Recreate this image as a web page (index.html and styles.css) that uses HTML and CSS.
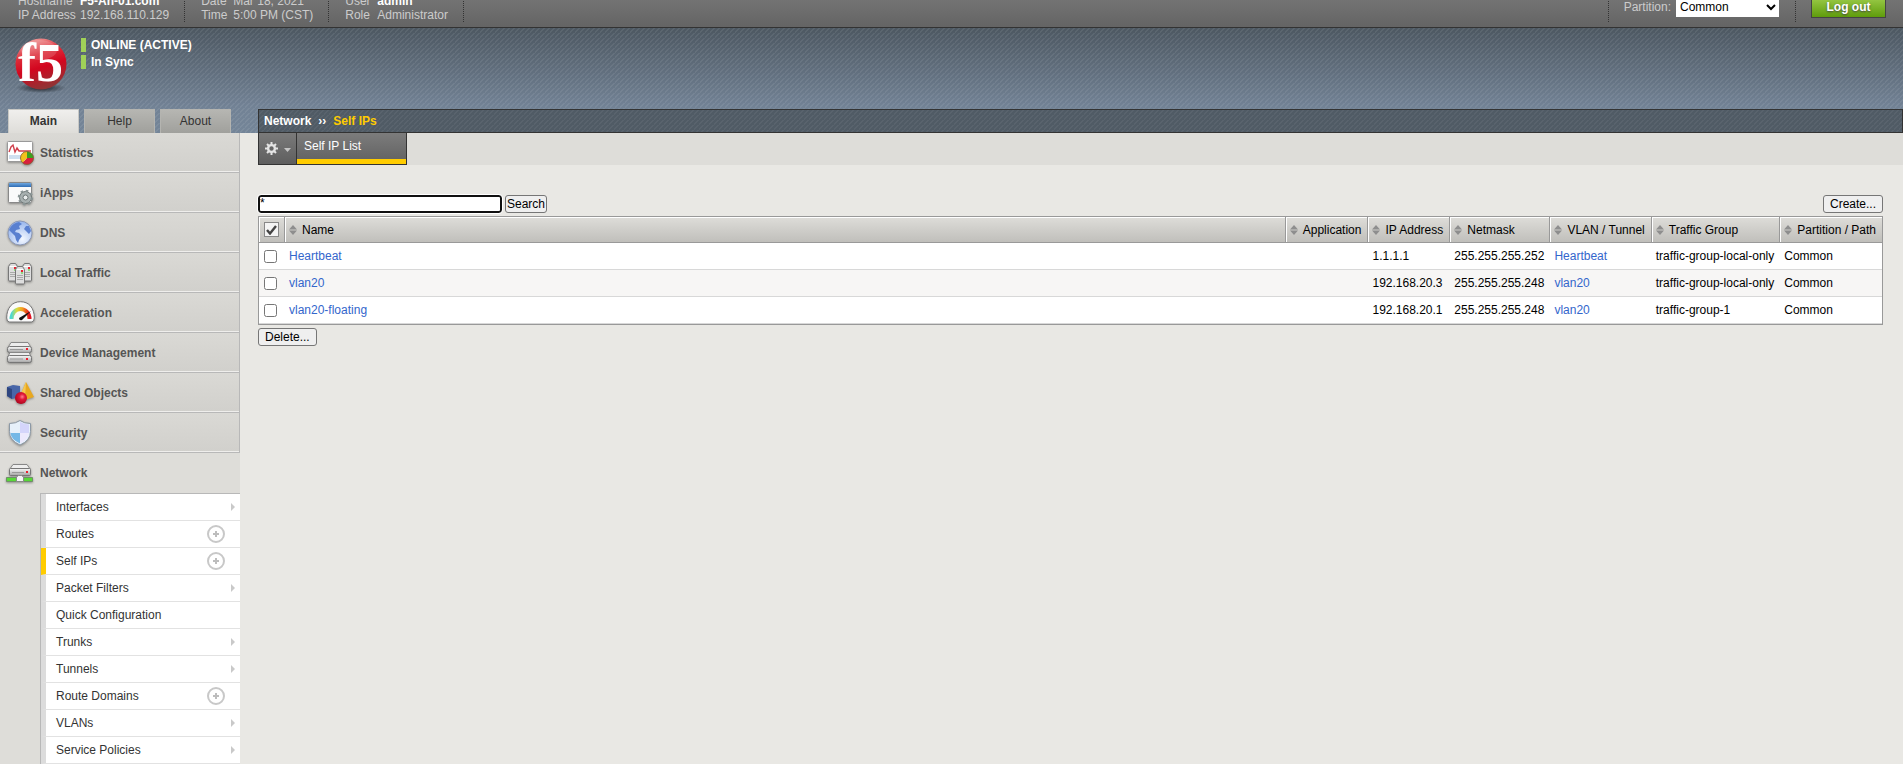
FILE: index.html
```html
<!DOCTYPE html>
<html lang="en">
<head>
<meta charset="utf-8">
<title>Network : Self IPs</title>
<link rel="stylesheet" href="styles.css">
</head>
<body>
<svg class="defs" aria-hidden="true">
  <defs>
    <linearGradient id="steel" x1="0" y1="0" x2="0" y2="1"><stop offset="0" stop-color="#fafafa"/><stop offset="1" stop-color="#a4a4a4"/></linearGradient>
    <linearGradient id="blueBar" x1="0" y1="0" x2="0" y2="1"><stop offset="0" stop-color="#6fa8e0"/><stop offset="1" stop-color="#2f6cb4"/></linearGradient>
    <radialGradient id="globe" cx=".6" cy=".75" r=".8"><stop offset="0" stop-color="#f4f8ff"/><stop offset="1" stop-color="#8fb0ec"/></radialGradient>
    <linearGradient id="dial" x1="0" y1="0" x2="1" y2="0"><stop offset="0" stop-color="#4fd8d0"/><stop offset=".3" stop-color="#d8dc3c"/><stop offset=".6" stop-color="#f4a020"/><stop offset="1" stop-color="#e01020"/></linearGradient>
    <radialGradient id="ball" cx=".6" cy=".4" r=".6"><stop offset="0" stop-color="#ff8090"/><stop offset=".4" stop-color="#e01838"/><stop offset="1" stop-color="#b00820"/></radialGradient>
    <linearGradient id="logoBall" x1=".2" y1="0" x2=".5" y2="1"><stop offset="0" stop-color="#f2a7a4"/><stop offset=".35" stop-color="#dc2b38"/><stop offset=".6" stop-color="#d3061f"/><stop offset="1" stop-color="#8f3535"/></linearGradient>
    <radialGradient id="logoShadow"><stop offset="0" stop-color="#20262c"/><stop offset="1" stop-color="#20262c" stop-opacity="0"/></radialGradient>
    <symbol id="sort" viewBox="0 0 8 10"><path d="M0 4.500 4 0l4 4.500zM0 5.500h8L4 10z" fill="#8e8e8e"/></symbol>
    <symbol id="more" viewBox="0 0 4 8"><path d="M0 0l4 4-4 4z" fill="#c9c9c9"/></symbol>
    <symbol id="add" viewBox="0 0 18 18"><circle cx="9" cy="9" r="8" fill="#fff" stroke="#c8c8c8" stroke-width="2"/><path d="M6 9h6M9 6v6" stroke="#bdbdbd" stroke-width="2"/></symbol>
    <g id="server"><path d="M.5 3.500 2.500.5h5l2 3v13.500q0 1-1 1h-7q-1 0-1-1z" fill="#dedede" stroke="#777"/><path d="M2 3.500h6" stroke="#fff"/><path d="M2 9.500h6M2 11.500h6M2 13.500h6" stroke="#aaa"/><path d="M6 4h2v2H6z" fill="#e82030"/><path d="M6 6h2v2H6z" fill="#90d880"/></g>
  </defs>
</svg>

<header class="topbar">
  <dl class="facts">
    <div><dt>Hostname</dt><dd class="strong">F5-An-01.com</dd></div>
    <div><dt>IP Address</dt><dd>192.168.110.129</dd></div>
  </dl>
  <dl class="facts">
    <div><dt class="short">Date</dt><dd>Mar 18, 2021</dd></div>
    <div><dt class="short">Time</dt><dd>5:00 PM (CST)</dd></div>
  </dl>
  <dl class="facts">
    <div><dt class="short">User</dt><dd class="strong">admin</dd></div>
    <div><dt class="short">Role</dt><dd>Administrator</dd></div>
  </dl>
  <div class="partition">
    <label for="partition">Partition:</label>
    <select id="partition"><option>Common</option></select>
  </div>
  <div class="logout"><button type="button">Log out</button></div>
</header>

<div class="banner">
  <div class="brand">
    <svg class="logo" width="56" height="56" viewBox="0 0 56 56" role="img" aria-label="F5">
      <ellipse cx="28" cy="50" rx="25" ry="5" fill="url(#logoShadow)"/>
      <circle cx="28" cy="26" r="25.500" fill="url(#logoBall)"/>
      <ellipse cx="26" cy="12" rx="18" ry="10" fill="#fff" opacity=".15"/>
      <text x="5" y="43" class="logo-text">f5</text>
    </svg>
    <div class="status">
      <span>ONLINE (ACTIVE)</span>
      <span>In Sync</span>
    </div>
  </div>
  <div class="bars">
    <nav class="tabs">
      <a href="#main" class="current">Main</a>
      <a href="#help">Help</a>
      <a href="#about">About</a>
    </nav>
    <div class="crumbs"><span>Network</span><span class="sep">››</span><span class="here">Self IPs</span></div>
  </div>
</div>

<div class="page">
  <nav class="side">
    <a class="item" href="#statistics"><svg width="30" height="28" viewBox="0 0 30 28"><rect x="1.500" y="2.500" width="25" height="20" rx="1" fill="#fff" stroke="#999"/><path d="M3 16h22v4H3z" fill="#cfe0f0"/><path d="M3 13l2-5 2-2 2 7 2-4 2 3h12" fill="none" stroke="#d0404c" stroke-width="1.400"/><path d="M21 19V12.500A6.500 6.500 0 0 1 27.500 19z" fill="#3ca020"/><path d="M21 19h6.500a6.500 6.500 0 0 1-11 4.700z" fill="#d8203c"/><path d="M21 19l-4.500 4.700A6.500 6.500 0 0 1 21 12.500z" fill="#f2c21c"/><circle cx="21" cy="19" r="6.500" fill="none" stroke="#806030" stroke-width=".8"/></svg>Statistics</a>
    <a class="item" href="#iapps"><svg width="30" height="28" viewBox="0 0 30 28"><rect x="2.500" y="3.500" width="23" height="20" rx="1" fill="#fafafa" stroke="#888"/><path d="M3 4h22v4H3z" fill="url(#blueBar)"/><circle cx="19.500" cy="18.500" r="6" fill="#a7b0b0" stroke="#6e7777" stroke-width="1"/><circle cx="19.500" cy="18.500" r="6.800" fill="none" stroke="#8b9696" stroke-width="2" stroke-dasharray="2.600 2.740"/><circle cx="19.500" cy="18.500" r="2.500" fill="#e8ecec" stroke="#6e7777"/></svg>iApps</a>
    <a class="item" href="#dns"><svg width="30" height="28" viewBox="0 0 30 28"><circle cx="14" cy="14" r="12" fill="url(#globe)" stroke="#8b98b8"/><path d="M4 9q3-5 9-6l3 2-3 2 1 3-4 1-1 2 4 1 3 3-3 4-1 3-2-3-1-4-4-4-2-2zM20 7l3 0 2 5-2 3-3-3-2-2z" fill="#5a80d0"/></svg>DNS</a>
    <a class="item" href="#local-traffic"><svg width="30" height="28" viewBox="0 0 30 28"><use href="#server" x="2" y="4"/><use href="#server" x="16" y="4"/><use href="#server" x="9" y="7"/></svg>Local Traffic</a>
    <a class="item" href="#acceleration"><svg width="30" height="28" viewBox="0 0 30 28"><path d="M.7 19C.7 9 6 2.700 14.500 2.700S28.300 9 28.300 19q0 4-3 4h-21.600q-3 0-3-4z" fill="#fafafa" stroke="#777"/><path d="M5.500 20a9 10 0 0 1 18 0" fill="none" stroke="url(#dial)" stroke-width="4"/><path d="M13 19l12-7-9 9q-3 1-3-2z" fill="#111"/></svg>Acceleration</a>
    <a class="item" href="#device"><svg width="30" height="28" viewBox="0 0 30 28"><path d="M5 3.500h17l3 5H2z" fill="#ececec" stroke="#888"/><rect x="1.500" y="7.500" width="24" height="6" rx="2" fill="url(#steel)" stroke="#777"/><path d="M4 13.500h19l2 4H2z" fill="#ececec" stroke="#888"/><rect x="1.500" y="16.500" width="24" height="7" rx="2" fill="url(#steel)" stroke="#777"/><path d="M4 10.500h13M4 20h13" stroke="#999"/><path d="M20 9h2v2h-2zM20 19h2v2h-2z" fill="#e82030"/></svg>Device Management</a>
    <a class="item" href="#shared"><svg width="30" height="28" viewBox="0 0 30 28"><path d="M1 8l6-2 7 1v11l-8 2-5-3z" fill="#4866a8"/><path d="M1 8l5 2v10l-5-3z" fill="#2f4680"/><path d="M20 3l8 15-9 3-5-4z" fill="#e8a820"/><path d="M20 3l-6 14 5 4z" fill="#f6c850"/><circle cx="15" cy="19" r="6" fill="url(#ball)"/></svg>Shared Objects</a>
    <a class="item" href="#security"><svg width="30" height="28" viewBox="0 0 30 28"><path d="M14 1.500q4 3 10.500 3v8q0 9-10.500 13.500Q3.500 21.500 3.500 12.500v-8q6.500 0 10.500-3z" fill="#e6f0fa" stroke="#8c99a6"/><path d="M14 3q4 2 9 2.500V14h-9z" fill="#d4d5fb"/><path d="M14 14v10.500Q5 20.500 4.500 14z" fill="#74b8e6"/><path d="M14 14h9q-1 7-9 10.500z" fill="#ece9fd"/></svg>Security</a>
    <a class="item open" href="#network"><svg width="30" height="28" viewBox="0 0 30 28"><path d="M7 5.500h14l3.500 5h-21z" fill="#eee" stroke="#888"/><rect x="3.500" y="9.500" width="21" height="7" rx="1" fill="url(#steel)" stroke="#777"/><path d="M6 13.500h12" stroke="#999"/><path d="M20 12h2v2h-2z" fill="#e82030"/><path d="M.5 18.500h26v4H.5z" fill="#58d838" stroke="#6f8f68"/><path d="M10.500 18l2-1.500h3l2 1.500v4.500h-7z" fill="#f4f4f4" stroke="#888"/></svg>Network</a>
    <ul class="submenu">
      <li><a href="#interfaces">Interfaces</a><svg class="more"><use href="#more"/></svg></li>
      <li><a href="#routes">Routes</a><svg class="add"><use href="#add"/></svg></li>
      <li class="selected"><a href="#selfips">Self IPs</a><svg class="add"><use href="#add"/></svg></li>
      <li><a href="#filters">Packet Filters</a><svg class="more"><use href="#more"/></svg></li>
      <li><a href="#quick">Quick Configuration</a></li>
      <li><a href="#trunks">Trunks</a><svg class="more"><use href="#more"/></svg></li>
      <li><a href="#tunnels">Tunnels</a><svg class="more"><use href="#more"/></svg></li>
      <li><a href="#domains">Route Domains</a><svg class="add"><use href="#add"/></svg></li>
      <li><a href="#vlans">VLANs</a><svg class="more"><use href="#more"/></svg></li>
      <li><a href="#policies">Service Policies</a><svg class="more"><use href="#more"/></svg></li>
    </ul>
  </nav>

  <main>
    <div class="menubar">
      <button type="button" class="gear" aria-label="Options"><svg width="26" height="13" viewBox="0 0 26 13"><path d="M6.500 0v13M0 6.500h13M2 2l9 9M11 2l-9 9" stroke="#e4e4e4" stroke-width="2"/><circle cx="6.500" cy="6.500" r="3.400" fill="#666" stroke="#e4e4e4" stroke-width="2.400"/><path d="M19 6h7l-3.500 4z" fill="#c4c4c4"/></svg></button>
      <a class="view" href="#list">Self IP List</a>
    </div>
    <form class="content">
      <div class="tools">
        <input type="text" class="filter" value="*" aria-label="Filter">
        <button type="button" class="btn tight">Search</button>
        <button type="button" class="btn create">Create...</button>
      </div>
      <table>
        <thead>
          <tr>
            <th class="pick"><button type="button" class="all" aria-label="Select all"><svg width="11" height="10" viewBox="0 0 11 10"><path d="M1 5l3 3.500L10 1" fill="none" stroke="#444" stroke-width="2.400"/></svg></button></th>
            <th class="name"><svg class="sort"><use href="#sort"/></svg>Name</th>
            <th><svg class="sort"><use href="#sort"/></svg>Application</th>
            <th><svg class="sort"><use href="#sort"/></svg>IP Address</th>
            <th><svg class="sort"><use href="#sort"/></svg>Netmask</th>
            <th><svg class="sort"><use href="#sort"/></svg>VLAN / Tunnel</th>
            <th><svg class="sort"><use href="#sort"/></svg>Traffic Group</th>
            <th><svg class="sort"><use href="#sort"/></svg>Partition / Path</th>
          </tr>
        </thead>
        <tbody>
          <tr><td class="pick"><input type="checkbox" aria-label="Heartbeat"></td><td><a href="#h">Heartbeat</a></td><td></td><td>1.1.1.1</td><td>255.255.255.252</td><td><a href="#vh">Heartbeat</a></td><td>traffic-group-local-only</td><td>Common</td></tr>
          <tr><td class="pick"><input type="checkbox" aria-label="vlan20"></td><td><a href="#v">vlan20</a></td><td></td><td>192.168.20.3</td><td>255.255.255.248</td><td><a href="#vv">vlan20</a></td><td>traffic-group-local-only</td><td>Common</td></tr>
          <tr><td class="pick"><input type="checkbox" aria-label="vlan20-floating"></td><td><a href="#vf">vlan20-floating</a></td><td></td><td>192.168.20.1</td><td>255.255.255.248</td><td><a href="#vvf">vlan20</a></td><td>traffic-group-1</td><td>Common</td></tr>
        </tbody>
      </table>
      <button type="button" class="btn">Delete...</button>
    </form>
  </main>
</div>
</body>
</html>
```
FILE: styles.css
```css
* { box-sizing: border-box; }

body {
  margin: 0;
  min-height: 100vh;
  display: flex;
  flex-direction: column;
  background: #e9e8e4;
  color: #000;
  font: 12px/14px "Liberation Sans", Arial, sans-serif;
}

button, input, select { font: inherit; }
a { color: inherit; text-decoration: none; }
.defs { position: absolute; width: 0; height: 0; }

/* Top bar */
.topbar {
  height: 28px;
  flex: none;
  display: flex;
  align-items: flex-end;
  padding: 0 17px 5px 0;
  border-bottom: 1px solid #333;
  background: linear-gradient(#737373, #646464);
  color: #ccc;
}
.facts {
  margin: 0;
  padding: 0 15px 0 18px;
  border-right: 1px dotted #333;
}
.facts + .facts { padding-left: 16px; }
.facts div { display: flex; }
.facts dt { width: 62px; }
.facts dt.short { width: 32px; }
.facts dd { margin: 0; }
.facts .strong { color: #fff; font-weight: bold; }
.partition {
  display: flex;
  align-items: center;
  gap: 5px;
  height: 28px;
  margin-left: auto;
  padding: 0 16px 2px 15px;
  border: dotted #333;
  border-width: 0 1px;
}
.partition select {
  width: 103px;
  height: 19px;
  flex: none;
  border: 0;
  background: #fff;
  color: #000;
}
.logout { padding: 0 0 4px 15px; }
.logout button {
  width: 75px;
  height: 22px;
  padding: 0;
  border: 1px solid #444;
  background: linear-gradient(#9ccc4a, #5f9c0c);
  color: #fff;
  font-weight: bold;
  text-shadow: 0 1px 2px #444;
}

/* Banner */
.banner {
  flex: none;
  background:
    linear-gradient(135deg, transparent 40%, rgba(255, 255, 255, .07) 40% 60%, transparent 60%) 0 0 / 5px 5px,
    linear-gradient(#4d5862, #728295 75%, #748598);
}
.brand {
  height: 81px;
  display: flex;
  padding: 10px 0 0 13px;
}
.logo-text { font: bold 54px "Liberation Serif", serif; fill: #fff; }
.status {
  display: flex;
  flex-direction: column;
  align-self: flex-start;
  gap: 3px;
  padding-left: 12px;
  color: #fff;
  font-weight: bold;
}
.status span { padding-left: 5px; border-left: 5px solid #a0d158; }
.bars { display: flex; height: 24px; }
.tabs {
  width: 258px;
  flex: none;
  display: flex;
  gap: 5px;
  padding-left: 8px;
}
.tabs a {
  width: 71px;
  border: 1px solid #b4b4b0;
  border-bottom: 0;
  background: linear-gradient(#b6b6b2, #a0a09c);
  color: #333;
  line-height: 23px;
  text-align: center;
}
.tabs .current {
  border-color: #c8c8c4;
  background: linear-gradient(#f0efed, #deddd9);
  font-weight: bold;
}
.crumbs {
  flex: 1;
  display: flex;
  gap: 7px;
  padding-left: 5px;
  border: 1px solid #333;
  background:
    linear-gradient(135deg, transparent 40%, rgba(255, 255, 255, .05) 40% 60%, transparent 60%) 0 0 / 5px 5px,
    #505b65;
  color: #fff;
  font-weight: bold;
  line-height: 22px;
}
.crumbs .here { color: #fc0; }

/* Side menu */
.page { flex: 1; display: flex; }
.side { width: 240px; flex: none; background: #deddd9; }
.item {
  height: 40px;
  display: flex;
  align-items: center;
  gap: 4px;
  padding-left: 6px;
  border-right: 1px solid #b8b8b8;
  border-bottom: 1px solid #b8b8b8;
  background: linear-gradient(#dad9d5, #d1d0cc);
  box-shadow: inset 0 -1px #efeeec;
  color: #555;
  font-weight: bold;
}
.item.open { border: 0; background: none; box-shadow: none; }
.item svg { filter: drop-shadow(0 1px 1px rgba(0, 0, 0, .35)); }
.submenu {
  margin: 0 0 0 40px;
  padding: 0;
  list-style: none;
  border: solid #b8b8b8;
  border-width: 1px 0 0 1px;
}
.submenu li {
  height: 27px;
  display: flex;
  align-items: center;
  padding: 0 5px 0 10px;
  border-left: 5px solid #dcdcdc;
  border-bottom: 1px solid #e2e2e2;
  background: #fff;
  color: #333;
}
.submenu .selected { border-left-color: #fc0; }
.submenu a { flex: 1; }
.more { width: 4px; height: 8px; }
.add { width: 18px; height: 18px; margin-right: 10px; }

/* Main area */
main { flex: 1; padding-left: 18px; }
.menubar { display: flex; height: 32px; background: #deddd9; }
.gear {
  width: 39px;
  padding: 0;
  border: 1px solid #333;
  border-top: 0;
  background: linear-gradient(#7a7a7a, #5e5e5e);
}
.gear svg { display: block; margin: auto; }
.view {
  width: 110px;
  padding: 6px 7px;
  border: solid #333;
  border-width: 0 1px 1px 0;
  background: linear-gradient(#7c7c7c, #606060);
  box-shadow: inset 0 -5px #fc0;
  color: #fff;
}
.content { padding: 30px 20px 0 0; }
.tools { display: flex; gap: 3px; margin-bottom: 3px; }
.filter {
  width: 244px;
  height: 18px;
  padding: 0 0 2px;
  border: 2px solid #101010;
  border-radius: 3px;
  outline: 1px solid #fff;
}
.btn {
  height: 18px;
  padding: 0 6px;
  border: 1px solid #767676;
  border-radius: 3px;
  background: #efefef;
  color: #000;
  line-height: 14px;
}
.tight { padding: 0 1px; }
.create { margin-left: auto; }

table {
  width: 100%;
  margin-bottom: 3px;
  border: 1px solid #999;
  border-spacing: 0;
  background: #fff;
  white-space: nowrap;
}
th {
  height: 26px;
  padding: 0 6px 0 4px;
  border-right: 1px solid #999;
  border-bottom: 1px solid #999;
  background: linear-gradient(#deddd9, #c0bfbb);
  box-shadow: inset 1px 1px #fff;
  font-weight: normal;
  text-align: left;
}
th:last-child { border-right: 0; }
.name { width: 100%; }
.sort { width: 8px; height: 10px; margin-right: 5px; vertical-align: -1px; }
td { height: 27px; padding: 0 6px 0 4px; border-bottom: 1px solid #d8d8d8; }
tbody tr:nth-child(even) { background: #f7f6f5; }
tbody a { color: #36c; }
.pick { padding: 0 5px; }
.pick input { display: block; width: 13px; height: 13px; margin: 0; }
.all {
  width: 15px;
  height: 15px;
  display: grid;
  place-items: center;
  padding: 0;
  border: 1px solid #888;
  background: #f4f4f4;
}
```
